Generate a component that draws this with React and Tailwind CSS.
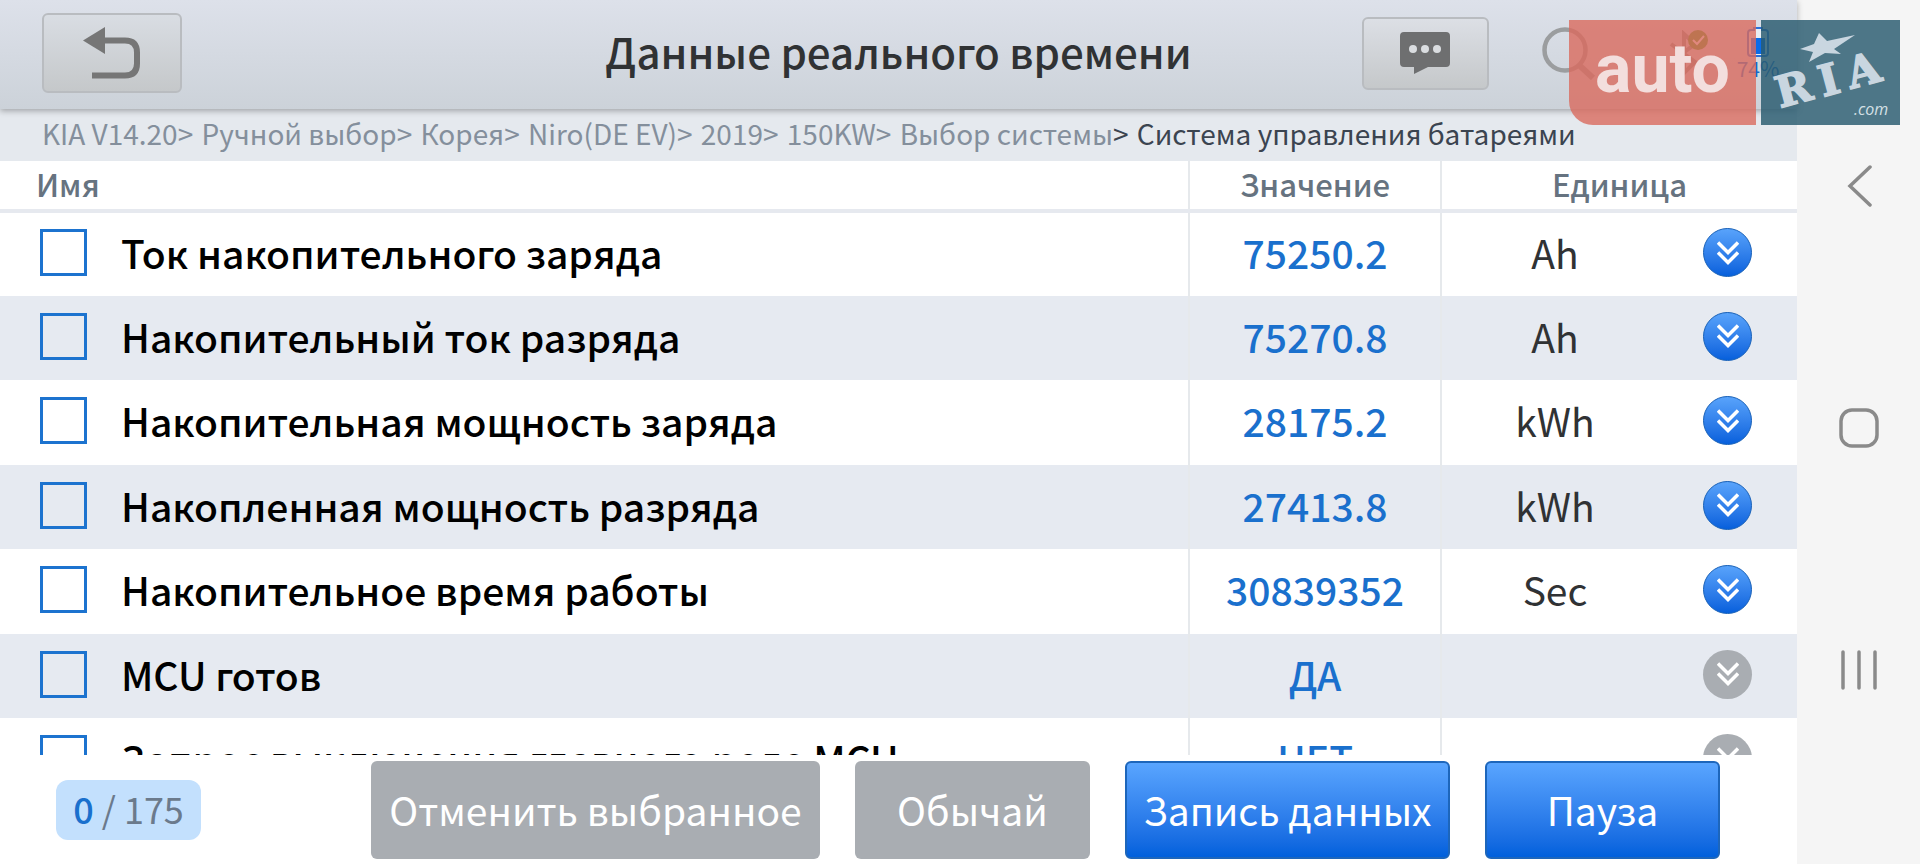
import React from "react";

const rows = [
  { name: "Ток накопительного заряда", value: "75250.2", unit: "Ah", graph: true },
  { name: "Накопительный ток разряда", value: "75270.8", unit: "Ah", graph: true },
  { name: "Накопительная мощность заряда", value: "28175.2", unit: "kWh", graph: true },
  { name: "Накопленная мощность разряда", value: "27413.8", unit: "kWh", graph: true },
  { name: "Накопительное время работы", value: "30839352", unit: "Sec", graph: true },
  { name: "MCU готов", value: "ДА", unit: "", graph: false },
  { name: "Запрос выключения главного реле MCU", value: "НЕТ", unit: "", graph: false },
];

const trail = ["KIA V14.20", "Ручной выбор", "Корея", "Niro(DE EV)", "2019", "150KW", "Выбор системы"];

function BackIcon() {
  return (
    <svg width="58" height="52" viewBox="0 0 58 52" aria-hidden="true">
      <path d="M22 0v27L0 13.500z" fill="#767676" />
      <path d="M20 13.500h22q12 0 12 12v11q0 12-12 12H9" fill="none" stroke="#767676" strokeWidth="6" />
    </svg>
  );
}

function MessageIcon() {
  return (
    <svg width="50" height="42" viewBox="0 0 50 42" aria-hidden="true">
      <path d="M4 0h42q4 0 4 4v27q0 4-4 4H28l-14 7v-7H4q-4 0-4-4V4q0-4 4-4z" fill="#6e6f70" />
      <g fill="#dadde0">
        <circle cx="13" cy="17" r="4" />
        <circle cx="25" cy="17" r="4" />
        <circle cx="37" cy="17" r="4" />
      </g>
    </svg>
  );
}

function SearchIcon() {
  return (
    <svg width="54" height="54" viewBox="0 0 54 54" fill="none" stroke="#9b9d9f" aria-hidden="true">
      <circle cx="23" cy="24" r="20.500" strokeWidth="4.500" />
      <path d="M37 39l14 13" strokeWidth="6" />
    </svg>
  );
}

function BluetoothIcon() {
  return (
    <svg width="40" height="46" viewBox="0 0 40 46" fill="none" aria-hidden="true">
      <path d="M2 14l24 18-11 11V4l11 10L2 32" stroke="#8f9092" strokeWidth="4" />
      <circle cx="29" cy="10" r="10" fill="#4f9a1f" />
      <path d="M24 10l4 4 7-8" stroke="#fff" strokeWidth="2" />
    </svg>
  );
}

function BatteryIcon() {
  return (
    <svg width="22" height="30" viewBox="0 0 22 30" aria-hidden="true">
      <path d="M7 1h8v2h3q3 0 3 3v20q0 3-3 3H4q-3 0-3-3V6q0-3 3-3h3z" fill="#e8edf3" stroke="#2a6fd8" strokeWidth="2" />
      <path d="M4 11h14v16H4z" fill="#0a6be8" />
    </svg>
  );
}

function Expand({ active }) {
  return (
    <button
      type="button"
      aria-label="Развернуть"
      disabled={!active}
      className={
        active
          ? "flex size-[49px] items-center justify-center rounded-full border border-[#1a62b8] bg-linear-to-b from-[#58a3fb] to-[#0560dc]"
          : "flex size-[49px] items-center justify-center rounded-full bg-[#a9adb2]"
      }
    >
      <svg width="22" height="24" viewBox="0 0 22 24" fill="none" stroke="#fff" strokeWidth="3.500" aria-hidden="true">
        <path d="M1 1.500l10 10 10-10M1 11.500l10 10 10-10" />
      </svg>
    </button>
  );
}

function Logo() {
  return (
    <div className="absolute top-5 right-5 z-20 flex gap-[5px]">
      <div className="flex h-[105px] w-[187px] items-center justify-center rounded-bl-3xl bg-[#d96a5e]/80 pb-2 font-[Roboto,sans-serif] text-[68px] leading-none font-bold text-[#f3dedd]">
        auto
      </div>
      <svg width="139" height="105" viewBox="0 0 139 105" aria-hidden="true">
        <path d="M0 0h139v105H0z" fill="#2a5b70" fillOpacity=".83" />
        <path d="M58 13l8 8 28-6-21 14 7 5-16-1-16 9 4-10-13-3 14-5z" fill="#c9d6e0" />
        <g fontFamily="'DejaVu Serif', serif" fontWeight="700" fontSize="43" fill="#c9d6e0" stroke="#c9d6e0" strokeWidth="1.500">
          <text transform="translate(19 88) rotate(-15)">R</text>
          <text transform="translate(62 77) rotate(-15)">I</text>
          <text transform="translate(90 69) rotate(-15)">A</text>
        </g>
        <text x="93" y="95" fontFamily="'Open Sans', sans-serif" fontStyle="italic" fontSize="16" fill="#d5e0e6">.com</text>
      </svg>
    </div>
  );
}

export default function App() {
  return (
    <div className="relative flex h-screen overflow-hidden bg-[#f5f5f5] font-['Noto_Sans_CJK_SC',sans-serif]">
      <main className="flex min-w-0 flex-1 flex-col bg-white">
        <header className="relative z-10 grid h-[109px] shrink-0 grid-cols-[1fr_auto_1fr] items-center bg-linear-to-b from-[#dde1ea] to-[#ccd2d9] pb-[3px] shadow-[0_2px_6px_rgba(0,0,0,0.3)]">
          <button type="button" aria-label="Назад" className="ml-[42px] flex h-20 w-[140px] items-center justify-center rounded-md border-2 border-[#b9bcc0] bg-linear-to-b from-[#d9dde3] to-[#c5c8ca]">
            <BackIcon />
          </button>
          <h1 className="pb-1 text-[42px] leading-none font-medium text-[#303234]">Данные реального времени</h1>
          <div className="flex items-center pl-[170px]">
            <button type="button" aria-label="Сообщения" className="flex h-[73px] w-[127px] shrink-0 items-center justify-center rounded-md border-2 border-[#b9bcc0] bg-linear-to-b from-[#dcdfe5] to-[#c5c8ca]">
              <MessageIcon />
            </button>
            <button type="button" aria-label="Поиск" className="ml-[53px] shrink-0">
              <SearchIcon />
            </button>
            <div className="ml-[73px] shrink-0">
              <BluetoothIcon />
            </div>
            <div className="ml-[28px] flex shrink-0 flex-col items-center text-[21px] leading-[22px] text-[#1668cc]">
              <BatteryIcon />
              <span>74%</span>
            </div>
          </div>
        </header>

        <nav aria-label="Путь" className="flex h-[52px] shrink-0 items-center bg-[#e5e9ee] px-[42px] pb-1 text-[28px] whitespace-pre text-[#848f9c]">
          {trail.map((item, i) => (
            <React.Fragment key={item}>
              <a href="#">{item}</a>
              <span className={i === trail.length - 1 ? "pr-[2px] text-[#3b4450]" : "pr-[2px]"}>{"> "}</span>
            </React.Fragment>
          ))}
          <span className="text-[#3b4450]">Система управления батареями</span>
        </nav>

        <div className="min-h-0 flex-1 overflow-hidden">
          <table className="w-full table-fixed border-collapse">
            <colgroup>
              <col />
              <col className="w-[252px]" />
              <col className="w-[356px]" />
            </colgroup>
            <thead>
              <tr className="h-[50px] border-b-4 border-[#e6e9ef] text-[31px] leading-none text-[#667380]">
                <th className="p-0 pb-1 pl-9 text-left font-medium">Имя</th>
                <th className="border-l-2 border-[#e6e9ec] p-0 pb-1 font-medium">Значение</th>
                <th className="border-l-2 border-[#e6e9ec] p-0 pb-1 font-medium">Единица</th>
              </tr>
            </thead>
            <tbody>
              {rows.map((row, i) => (
                <tr key={row.name} className="h-[84px] text-[39px] leading-none odd:h-[85px] even:bg-[#e6eaf1]">
                  <td className="p-0 pb-1 pl-10">
                    <label className="flex items-center gap-[34px] font-medium whitespace-nowrap text-black">
                      <input id={`row-${i}`} type="checkbox" className="size-[47px] shrink-0 appearance-none border-3 border-[#1c73cf]" />
                      {row.name}
                    </label>
                  </td>
                  <td className="border-l-2 border-[#e6e9ec] p-0 pb-1 text-center font-medium text-[#1a70cd]">{row.value}</td>
                  <td className="border-l-2 border-[#e6e9ec] p-0 pb-1">
                    <div className="flex items-center justify-end pr-[45px]">
                      <span className="w-[160px] text-center text-[#303234]">{row.unit}</span>
                      <span className="ml-[68px]"><Expand active={row.graph} /></span>
                    </div>
                  </td>
                </tr>
              ))}
            </tbody>
          </table>
        </div>

        <footer className="flex h-[109px] shrink-0 items-center bg-white pr-[77px] pl-14 text-[39px] leading-none text-white">
          <div className="flex h-[60px] w-[145px] items-center justify-center rounded-xl bg-[#c3e0fd] pb-1 text-[36px] whitespace-pre text-[#6b7a8c]">
            <span className="font-medium text-[#1a70cd]">0</span> / 175
          </div>
          <div className="ml-auto flex gap-[35px]">
            <button type="button" className="h-[98px] w-[449px] rounded-md bg-[#a9adb2]">Отменить выбранное</button>
            <button type="button" className="h-[98px] w-[235px] rounded-md bg-[#a9adb2]">Обычай</button>
            <button type="button" className="h-[98px] w-[325px] rounded-md border-2 border-[#1d66bb] bg-linear-to-b from-[#59a5ff] to-[#0060dc]">Запись данных</button>
            <button type="button" className="h-[98px] w-[235px] rounded-md border-2 border-[#1d66bb] bg-linear-to-b from-[#59a5ff] to-[#0060dc]">Пауза</button>
          </div>
        </footer>
      </main>

      <aside className="flex w-[123px] shrink-0 flex-col pt-[65px] pb-[73px]">
        <button type="button" aria-label="Назад в системе" className="flex flex-1 items-center justify-center">
          <svg width="42" height="42" viewBox="0 0 42 42" fill="none" stroke="#8a8a8a" strokeWidth="3.500" strokeLinecap="round" aria-hidden="true">
            <path d="M32 2L12 21l20 19" />
          </svg>
        </button>
        <button type="button" aria-label="Домой" className="flex flex-1 items-center justify-center">
          <svg width="42" height="42" viewBox="0 0 42 42" fill="none" stroke="#8a8a8a" strokeWidth="3.500" aria-hidden="true">
            <rect x="3" y="3" width="36" height="36" rx="11" />
          </svg>
        </button>
        <button type="button" aria-label="Недавние" className="flex flex-1 items-center justify-center">
          <svg width="42" height="42" viewBox="0 0 42 42" fill="none" stroke="#8a8a8a" strokeWidth="3.500" strokeLinecap="round" aria-hidden="true">
            <path d="M5 3v36M21 3v36M37 3v36" />
          </svg>
        </button>
      </aside>
      <Logo />
    </div>
  );
}
